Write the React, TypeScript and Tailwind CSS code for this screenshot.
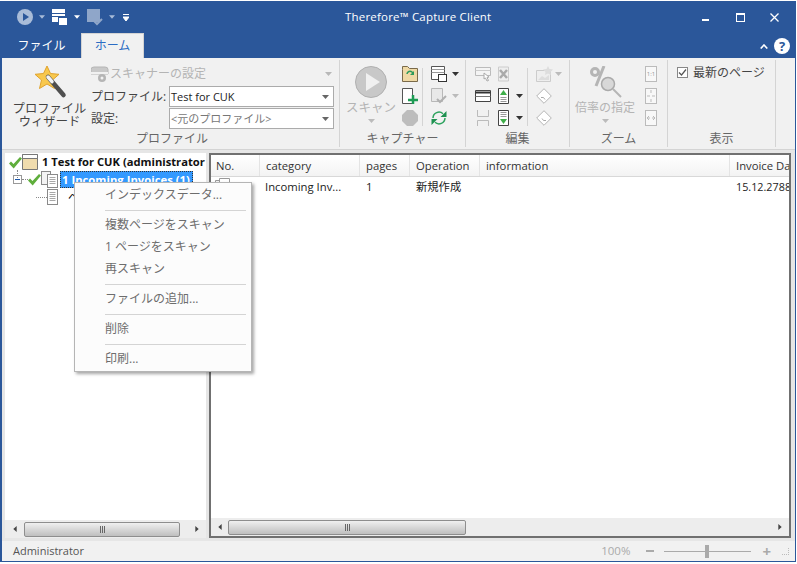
import React from "react";

const jp = "font-['Open_Sans','Noto_Sans_CJK_JP',sans-serif]";

function Caret({ className = "" }: { className?: string }) {
  return (
    <svg width="7" height="4" viewBox="0 0 7 4" className={`shrink-0 ${className}`}>
      <path d="M0 0h7L3.500 4z" fill="currentColor" />
    </svg>
  );
}

function Check() {
  return (
    <svg width="13" height="13" viewBox="0 0 13 13" className="shrink-0">
      <path d="M0 7.500l2-2 2.500 2.500L11 1l2 1.500L4.700 12.500z" fill="#5fae3c" />
    </svg>
  );
}

function PageStack() {
  return (
    <svg width="17" height="17" viewBox="0 0 17 17" className="shrink-0">
      <rect x="0.500" y="0.500" width="9" height="13" fill="#f4f4f4" stroke="#8a8a8a" />
      <rect x="6.500" y="3.500" width="10" height="13" fill="#fff" stroke="#8a8a8a" />
      <path d="M8.500 6.500h6M8.500 8.500h6M8.500 10.500h6M8.500 12.500h6" stroke="#a8a8a8" />
    </svg>
  );
}

function SinglePage() {
  return (
    <svg width="11" height="16" viewBox="0 0 11 16" className="shrink-0">
      <rect x="0.500" y="0.500" width="10" height="15" fill="#fff" stroke="#8a8a8a" />
      <path d="M2.500 3.500h6M2.500 5.500h6M2.500 7.500h6M2.500 9.500h6M2.500 11.500h6" stroke="#a8a8a8" />
    </svg>
  );
}

function Wizard() {
  return (
    <svg width="34" height="34" viewBox="0 0 34 34">
      <path d="M14 1l3.500 7.500 8.500.8-6.500 5.700 2 8.500-7.500-4.500-7.500 4.500 2-8.500L2 9.300l8.500-.8z" fill="#f8c84e" stroke="#e0a32e" />
      <path d="M15 12l15.500 18" stroke="#4f4f4f" strokeWidth="4.500" strokeLinecap="round" />
      <path d="M15 12l4 4.600" stroke="#f4f4f4" strokeWidth="3.500" strokeLinecap="round" />
    </svg>
  );
}

function ScannerIcon() {
  return (
    <svg width="19" height="17" viewBox="1 0 19 17" className="shrink-0 ml-px">
      <path d="M1 3.500Q1 1 4 1h11q3 0 3 2.500V8H1z" fill="#c9c9c9" stroke="#b5b5b5" />
      <rect x="1" y="6" width="17" height="2" fill="#f1f1f1" />
      <circle cx="12" cy="12" r="4" fill="#b5b5b5" />
      <circle cx="12" cy="12" r="1.500" fill="#f1f1f1" />
    </svg>
  );
}

function Combo({ text, muted }: { text: string; muted?: boolean }) {
  return (
    <div className="w-[165px] h-[21px] bg-white border border-[#ababab] flex items-center pl-px pr-[4px] justify-between">
      <span className={`text-[11px] leading-none whitespace-nowrap ${muted ? "text-[#777]" : "text-[#222]"}`}>{text}</span>
      <Caret className="text-[#666]" />
    </div>
  );
}

function Group({ width, label, children }: { width: number; label: string; children: React.ReactNode }) {
  return (
    <div className="flex flex-col border-r border-[#d4d4d4] h-[87px] shrink-0" style={{ width }}>
      <div className="flex-1 flex min-h-0">{children}</div>
      <div className="h-[20px] text-center text-[12px] leading-[24px] text-[#666]">{label}</div>
    </div>
  );
}

function FileGroup() {
  return (
    <Group width={335} label="プロファイル">
      <div className="w-[85px] flex flex-col items-center pt-[5px] pl-[4px]">
        <div className="ml-px"><Wizard /></div>
        <div className="text-[12.300px] leading-[13px] text-center text-[#444] mt-[3px] whitespace-nowrap">
          プロファイル
          <br />
          ウィザード
        </div>
      </div>
      <div className="flex flex-col pt-[4px]">
        <div className="h-[20px] mb-[2px] flex items-center text-[12px] text-[#b4b4b4] w-[244px] shrink-0">
          <ScannerIcon />
          <span className="flex-1 whitespace-nowrap">スキャナーの設定</span>
          <Caret className="text-[#b8b8b8] mr-[2px]" />
        </div>
        <div className="flex h-[21px] mb-px items-center text-[12px] text-[#444] shrink-0">
          <span className="w-[79px] pl-px whitespace-nowrap">プロファイル:</span>
          <Combo text="Test for CUK" />
        </div>
        <div className="flex h-[21px] items-center text-[12px] text-[#444] shrink-0">
          <span className="w-[79px] pl-px">設定:</span>
          <Combo text="<元のプロファイル>" muted />
        </div>
      </div>
    </Group>
  );
}

function CaptureGroup() {
  return (
    <Group width={126} label="キャプチャー">
      <div className="w-[60px] flex flex-col items-center pt-[6px] pl-[2px]">
        <svg width="32" height="32" viewBox="0 0 32 32" className="shrink-0">
          <circle cx="16" cy="16" r="15.500" fill="#c8c8c8" stroke="#b0b0b0" />
          <path d="M11 7l14 9-14 9z" fill="#f0f0f0" />
        </svg>
        <div className="text-[12.500px] leading-[16px] text-[#b4b4b4] mt-[2px] whitespace-nowrap">スキャン</div>
        <Caret className="text-[#bbb] mt-[3px]" />
      </div>
      <div className="w-[19px] flex flex-col items-center pt-[6px] gap-[6px]">
        <svg width="16" height="16" viewBox="0 0 16 16">
          <path d="M.500 3.500V.500h5l2 2h8v13H.500z" fill="#efd9a5" stroke="#7a6a4a" />
          <path d="M5 8a3 3 0 0 1 5-2l1 1" stroke="#2e9b5b" strokeWidth="1.500" fill="none" />
          <path d="M8 9h4V5z" fill="#2e9b5b" />
        </svg>
        <svg width="16" height="16" viewBox="0 0 16 16">
          <path d="M.500.500h10v15H.500z" fill="#fff" stroke="#555" />
          <path d="M6 12h10M11 7v9" stroke="#1d9b54" strokeWidth="2.500" />
        </svg>
        <svg width="16" height="16" viewBox="0 0 16 16">
          <path d="M5 0h6l5 5v6l-5 5H5l-5-5V5z" fill="#bdbdbd" />
        </svg>
      </div>
      <div className="w-px h-[58px] bg-[#d4d4d4] mt-[8px] ml-[3px]" />
      <div className="flex flex-col pt-[6px] pl-[8px] gap-[6px]">
        <div className="flex items-center gap-[5px] h-[16px]">
          <svg width="16" height="16" viewBox="0 0 16 16">
            <path d="M.500.500h13v13H.500z" fill="#fff" stroke="#555" />
            <path d="M.500 3.500h13M.500 6.500h13" stroke="#999" />
            <rect x="7.500" y="8.500" width="8" height="7" fill="#fff" stroke="#333" />
          </svg>
          <Caret className="text-[#333]" />
        </div>
        <div className="flex items-center gap-[5px] h-[16px]">
          <svg width="16" height="16" viewBox="0 0 16 16">
            <path d="M.500.500h11v13H.500z" fill="#e8e8e8" stroke="#b8b8b8" />
            <path d="M6 11l3 3 6-6" stroke="#b0b0b0" strokeWidth="2" fill="none" />
          </svg>
          <Caret className="text-[#bbb]" />
        </div>
        <svg width="16" height="16" viewBox="0 0 16 16">
          <path d="M2 8a6 6 0 0 1 10-4.300M14 8a6 6 0 0 1-10 4.300" stroke="#2ea35f" strokeWidth="1.500" fill="none" />
          <path d="M15.500 1v6h-6zM.500 15V9h6z" fill="#1e9150" />
        </svg>
      </div>
    </Group>
  );
}

function EditGroup() {
  return (
    <Group width={104} label="編集">
      <div className="flex flex-col pt-[6px] pl-[9px] gap-[6px]">
        <div className="flex items-center gap-[7px] h-[16px]">
          <svg width="16" height="16" viewBox="0 0 16 16">
            <path d="M.500 1.500h15v8H.500z" fill="#f4f4f4" stroke="#bbb" />
            <path d="M.500 4.500h15" stroke="#ccc" />
            <path d="M9 7l5 4-2 .5 1.500 3-1.500.5-1.500-3L9 13z" fill="#fff" stroke="#aaa" />
          </svg>
          <svg width="11" height="16" viewBox="0 0 11 16">
            <path d="M.500 1h10v14H.500z" fill="#eee" stroke="#ccc" />
            <path d="M2 4l7 8M9 4l-7 8" stroke="#aaa" strokeWidth="2.500" />
          </svg>
        </div>
        <div className="flex items-center gap-[7px] h-[16px]">
          <svg width="16" height="12" viewBox="0 0 16 12">
            <path d="M.500.500h15v11H.500z" fill="#fff" stroke="#444" />
            <path d="M.500 1.500h15v2H.500z" fill="#333" />
            <path d="M.500 6.500h15" stroke="#777" />
          </svg>
          <svg width="11" height="16" viewBox="0 0 11 16">
            <path d="M.500.500h10v15H.500z" fill="#fff" stroke="#444" />
            <path d="M5.500 2L9 7H2z" fill="#3fae49" />
            <path d="M2.500 9.500h6M2.500 11.500h6M2.500 13.500h6" stroke="#999" />
          </svg>
          <Caret className="text-[#333]" />
        </div>
        <div className="flex items-center gap-[7px] h-[16px]">
          <svg width="16" height="16" viewBox="0 0 16 16">
            <path d="M2.500 0v6.500h11V0M2.500 16V10.500h11V16" fill="none" stroke="#bbb" />
          </svg>
          <svg width="11" height="16" viewBox="0 0 11 16">
            <path d="M.500.500h10v15H.500z" fill="#fff" stroke="#444" />
            <path d="M2.500 2.500h6M2.500 4.500h6M2.500 6.500h6" stroke="#999" />
            <path d="M5.500 14L2 9h7z" fill="#3fae49" />
          </svg>
          <Caret className="text-[#333]" />
        </div>
      </div>
      <div className="w-px h-[58px] bg-[#d4d4d4] mt-[8px] ml-[4px]" />
      <div className="flex flex-col pt-[6px] pl-[8px] gap-[6px]">
        <div className="flex items-center gap-[2px] h-[16px]">
          <svg width="17" height="16" viewBox="0 0 17 16">
            <path d="M.500 4.500h14v11H.500z" fill="#eee" stroke="#ccc" />
            <path d="M2 14l4-4 3 2 4-3v5z" fill="#ddd" />
            <path d="M12 0l1.500 3L17 3.500 14.500 6l.5 3-3-1.500L9 9l.5-3L7 3.500 10.500 3z" fill="#ddd" />
          </svg>
          <Caret className="text-[#bbb]" />
        </div>
        <svg width="16" height="16" viewBox="0 0 16 16">
          <path d="M8 .700L15.300 8 8 15.300.700 8z" fill="#fff" stroke="#b5b5b5" />
          <path d="M5 9.500q3-1 4 2" stroke="#aaa" fill="none" />
        </svg>
        <svg width="16" height="16" viewBox="0 0 16 16">
          <path d="M8 .700L15.300 8 8 15.300.700 8z" fill="#fff" stroke="#b5b5b5" />
          <path d="M11 6.500q-3 1-4-2" stroke="#aaa" fill="none" transform="translate(-1 4)" />
        </svg>
      </div>
    </Group>
  );
}

function ZoomGroup() {
  return (
    <Group width={98} label="ズーム">
      <div className="w-[70px] flex flex-col items-center pt-[6px]">
        <svg width="34" height="32" viewBox="0 0 34 32" className="shrink-0 ml-[2px]">
          <circle cx="6" cy="6" r="3.500" fill="none" stroke="#b5b5b5" strokeWidth="3" />
          <path d="M15 0L7 20" stroke="#b5b5b5" strokeWidth="3" />
          <circle cx="19" cy="18" r="6.500" fill="#d8d8d8" stroke="#aaa" strokeWidth="1.500" />
          <path d="M24 23l8 8" stroke="#b5b5b5" strokeWidth="2" />
        </svg>
        <div className="text-[12px] leading-[16px] text-[#b4b4b4] mt-[2px] whitespace-nowrap">倍率の指定</div>
        <Caret className="text-[#bbb] mt-[3px]" />
      </div>
      <div className="flex flex-col pl-[5px] pt-[6px] gap-[6px]">
        <div className="w-[12px] h-[16px] bg-[#f8f8f8] border border-[#bbb] text-[6px] leading-[14px] text-center text-[#999]">1:1</div>
        <div className="w-[12px] h-[16px] bg-[#f8f8f8] border border-[#bbb] flex items-center justify-center">
          <svg width="10" height="14" viewBox="0 0 10 14">
            <path d="M5 1v3M5 10v3M1 7h3M6 7h3" stroke="#bbb" />
          </svg>
        </div>
        <div className="w-[12px] h-[16px] bg-[#f8f8f8] border border-[#bbb] flex items-center justify-center">
          <svg width="10" height="14" viewBox="0 0 10 14">
            <path d="M1 7h3M6 7h3M1 7l2-2M1 7l2 2M9 7l-2-2M9 7l-2 2" stroke="#bbb" fill="none" />
          </svg>
        </div>
      </div>
    </Group>
  );
}

function ViewGroup() {
  return (
    <Group width={108} label="表示">
      <div className="flex items-start pl-[9px] pt-[5px] gap-[5px] text-[12px] leading-[16px] text-[#444]">
        <div className="w-[11px] h-[11px] mt-[2px] bg-white border border-[#888] flex items-center justify-center">
          <svg width="9" height="9" viewBox="0 0 9 9">
            <path d="M1 4.500l2.500 2.500L8 1.500" stroke="#555" strokeWidth="1.200" fill="none" />
          </svg>
        </div>
        <span className="whitespace-nowrap">最新のページ</span>
      </div>
    </Group>
  );
}

function ScrollBar({ thumb, left }: { thumb: number; left: number }) {
  return (
    <div className="h-[18px] bg-[#ededed] flex items-center shrink-0">
      <div className="flex items-center justify-center text-[#444]" style={{ width: left }}>
        <Caret className="rotate-90 w-[6px]" />
      </div>
      <div
        className="h-[15px] rounded-[2px] border border-[#8e8e8e] bg-gradient-to-b from-[#f0f0f0] to-[#bfbfbf] flex items-center justify-center gap-px shrink-0"
        style={{ width: thumb }}
      >
        <span className="w-px h-[7px] bg-[#666]" />
        <span className="w-px h-[7px] bg-[#666]" />
        <span className="w-px h-[7px] bg-[#666]" />
      </div>
      <div className="flex-1 flex items-center justify-end pr-[6px] text-[#444]">
        <Caret className="-rotate-90 w-[6px]" />
      </div>
    </div>
  );
}

const columns = [
  { name: "No.", w: 49 },
  { name: "category", w: 100 },
  { name: "pages", w: 50 },
  { name: "Operation", w: 70 },
  { name: "information", w: 250 },
  { name: "Invoice Da", w: 60 },
];

const rowCells = ["", "Incoming Inv...", "1", "新規作成", "", "15.12.2788"];

function ListPanel() {
  return (
    <div className="w-[582px] border-2 border-[#707070] bg-white flex flex-col overflow-hidden shrink-0">
      <div className="h-[22px] flex bg-gradient-to-b from-white to-[#f3f3f3] border-b border-[#d8d8d8] shrink-0">
        {columns.map((c, i) => (
          <div
            key={c.name}
            className={`border-r border-[#e4e4e4] text-[11.300px] leading-[22px] text-[#333] whitespace-nowrap overflow-hidden shrink-0 ${i === 0 ? "pl-[5px]" : "pl-[6px]"}`}
            style={{ width: c.w }}
          >
            {c.name}
          </div>
        ))}
      </div>
      <div className="flex-1 min-h-0">
        <div className="flex h-[20px]">
          {rowCells.map((cell, i) => (
            <div
              key={i}
              className={`leading-[20px] text-[#222] whitespace-nowrap overflow-hidden shrink-0 ${i === 1 ? "pl-[5px]" : "pl-[6px]"} ${i === 5 ? "text-[10.800px]" : "text-[11.300px]"}`}
              style={{ width: columns[i].w }}
            >
              {i === 0 ? (
                <svg width="16" height="14" viewBox="0 0 16 14" className="-ml-[2px] mt-px">
                  <path d="M.500 2.500h10v11H.500z" fill="#f4f4f4" stroke="#999" />
                  <path d="M4.500.500h10v11h-10z" fill="#fff" stroke="#999" />
                </svg>
              ) : (
                cell
              )}
            </div>
          ))}
        </div>
      </div>
      <ScrollBar left={17} thumb={238} />
    </div>
  );
}

function TreePanel() {
  return (
    <div className="w-[201px] bg-white flex flex-col shrink-0 relative">
      <div className="flex-1 min-h-0 pl-[4px]">
        <div className="flex items-center h-[18px]">
          <Check />
          <svg width="17" height="17" viewBox="0 0 17 17" className="shrink-0">
            <path d="M.500.500h15v15H.500z" fill="#f0dcae" stroke="#777" />
            <path d="M.500.500h15v4H.500z" fill="#fff" stroke="#777" />
          </svg>
          <span className="text-[11.200px] font-bold text-[#111] whitespace-nowrap ml-[3px] w-[164px] overflow-hidden">
            1 Test for CUK (administrator
          </span>
        </div>
        <div className="flex items-center h-[17px] pl-[4px]">
          <div className="w-[9px] h-[9px] border border-[#999] bg-white flex items-center justify-center shrink-0">
            <span className="w-[5px] h-px bg-[#1a56a8]" />
          </div>
          <span className="w-[6px] border-t border-dotted border-[#888] shrink-0" />
          <Check />
          <PageStack />
          <span className="ml-[2px] w-[133px] bg-[#3399ff] text-white font-bold text-[11.300px] leading-[15px] h-[17px] pl-px border border-dotted border-[#333] whitespace-nowrap overflow-hidden">
            1 Incoming Invoices (1)
          </span>
        </div>
        <div className="flex items-center h-[18px] pl-[27px]">
          <span className="w-[11px] border-t border-dotted border-[#888] shrink-0" />
          <SinglePage />
          <span className="ml-[10px] text-[11px]">ペ</span>
        </div>
      </div>
      <ScrollBar left={19} thumb={156} />
      <span className="absolute left-[12px] top-[17px] h-[8px] border-l border-dotted border-[#888]" />
    </div>
  );
}

function ContextMenu() {
  const items = ["インデックスデータ...", null, "複数ページをスキャン", "1 ページをスキャン", "再スキャン", null, "ファイルの追加...", null, "削除", null, "印刷..."];
  return (
    <div className="absolute left-[74px] top-[182px] w-[178px] h-[190px] bg-[#fcfcfc] border border-[#b5b5b5] shadow-[2px_2px_3px_rgba(0,0,0,0.35)] pt-px text-[12px] text-[#6d6d6d]">
      {items.map((item, i) =>
        item === null ? (
          <div key={i} className="h-px bg-[#d4d4d4] ml-[30px] mr-[5px] mt-[4px] mb-[3px]" />
        ) : (
          <div key={i} className="h-[22px] pl-[30px] leading-[22px] whitespace-nowrap">
            {item}
          </div>
        ),
      )}
    </div>
  );
}

export default function App() {
  return (
    <div className={`relative w-[797px] h-[564px] bg-white overflow-hidden ${jp}`}>
      <div className="w-[796px] h-[561px] mt-px bg-[#2b579a] flex flex-col px-px pb-px">
        {/* title bar */}
        <div className="h-[32px] flex items-center text-white shrink-0 relative">
          <div className="flex items-center pl-[16px] w-[340px]">
            <svg width="16" height="16" viewBox="0 0 16 16" className="shrink-0">
              <circle cx="8" cy="8" r="8" fill="#a9bcd8" />
              <path d="M6 4l6 4-6 4z" fill="#2b579a" />
            </svg>
            <Caret className="text-[#a9bcd8] ml-[6px] w-[6px]" />
            <svg width="16" height="17" viewBox="0 0 16 17" className="ml-[7px] shrink-0">
              <path d="M0 0h13v13H0z" fill="#fff" />
              <path d="M0 4.500h13M0 7.500h13" stroke="#2b579a" />
              <rect x="6.500" y="8.500" width="9" height="8" fill="#fff" stroke="#2b579a" />
            </svg>
            <Caret className="text-white ml-[6px] w-[6px]" />
            <svg width="16" height="17" viewBox="0 0 16 17" className="ml-[7px] shrink-0">
              <path d="M0 0h13v13H0z" fill="#8fa6c9" />
              <path d="M7 12l3 3 5-5" stroke="#8fa6c9" strokeWidth="2" fill="none" />
            </svg>
            <Caret className="text-[#a9bcd8] ml-[6px] w-[6px]" />
            <svg width="6" height="7" viewBox="0 0 6 7" className="ml-[8px] shrink-0">
              <path d="M0 .500h6M0 3h6L3 7z" stroke="#fff" fill="#fff" strokeWidth="1" />
            </svg>
          </div>
          <span className="text-[11.500px] tracking-[0.2px] ml-[4px]">Therefore™ Capture Client</span>
          <div className="ml-auto flex items-center text-white pr-[16px]">
            <span className="w-[7px] h-[2px] bg-white mt-[6px]" />
            <span className="w-[9px] h-[9px] border border-white border-t-2 ml-[27px]" />
            <svg width="9" height="9" viewBox="0 0 9 9" className="ml-[25px]">
              <path d="M.500.500l8 8M8.500.500l-8 8" stroke="#fff" strokeWidth="1.300" />
            </svg>
          </div>
        </div>
        {/* tabs */}
        <div className="h-[25px] flex items-end shrink-0 relative">
          <div className="w-[80px] h-[25px] text-center text-[12px] leading-[25px] text-white pl-px">ファイル</div>
          <div className="w-[63px] h-[25px] bg-[#f1f1f1] border border-b-0 border-[#d4d4d4] text-center text-[12px] leading-[23px] text-[#2b6cc4]">ホーム</div>
          <div className="ml-auto flex items-center gap-[6px] pr-[5px] pb-[4px]">
            <svg width="8" height="5" viewBox="0 0 8 5">
              <path d="M.700 4.500L4 1l3.300 3.500" stroke="#fff" strokeWidth="1.600" fill="none" />
            </svg>
            <span className="w-[16px] h-[16px] rounded-full bg-white text-[#2b579a] text-[13px] leading-[16px] font-bold text-center">?</span>
          </div>
        </div>
        {/* ribbon */}
        <div className="h-[92px] bg-[#f1f1f1] border-b border-[#d4d4d4] flex pl-[3px] pt-[2px] ml-px shrink-0">
          <FileGroup />
          <CaptureGroup />
          <EditGroup />
          <ZoomGroup />
          <ViewGroup />
        </div>
        {/* body */}
        <div className="flex-1 min-h-0 bg-[#e6e6e6] flex gap-[3px] px-[3px] pt-[3px] pb-[3px] ml-px">
          <TreePanel />
          <ListPanel />
        </div>
        {/* status bar */}
        <div className="h-[20px] bg-[#f1f1f1] flex items-center pl-[11px] pr-[6px] text-[11px] text-[#555] ml-px shrink-0">
          <span>Administrator</span>
          <div className="ml-auto flex items-center text-[#aaa]">
            <span className="text-[11.500px]">100%</span>
            <span className="w-[8px] h-[2px] bg-[#aaa] ml-[16px]" />
            <div className="relative w-[87px] h-px bg-[#aaa] ml-[10px]">
              <span className="absolute left-[41px] -top-[6px] w-[4px] h-[13px] bg-[#aaa]" />
            </div>
            <span className="ml-[11px] text-[15px] leading-none font-bold">+</span>
            <span className="w-[7px] h-[7px] ml-[11px] border-r border-b border-dotted border-[#bbb]" />
          </div>
        </div>
      </div>
      <ContextMenu />
    </div>
  );
}
